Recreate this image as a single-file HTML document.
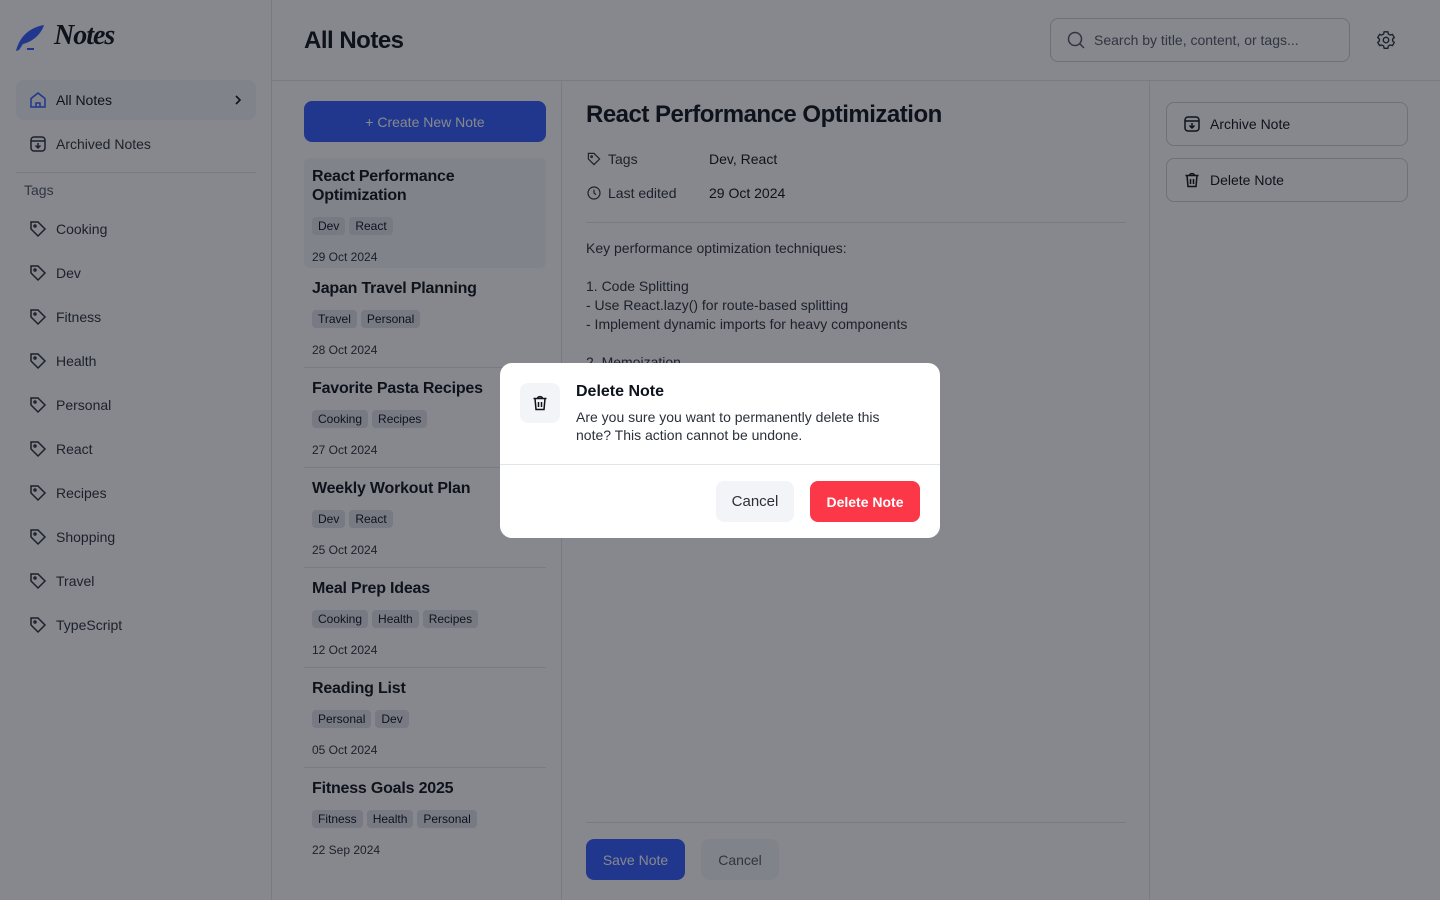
<!DOCTYPE html>
<html><head><meta charset="utf-8"><style>
*{box-sizing:border-box;margin:0;padding:0}
body{width:1440px;height:900px;position:relative;overflow:hidden;background:#fff;font-family:"Liberation Sans",sans-serif;color:#0e121b}
.a{position:absolute}
.side{left:0;top:0;width:272px;height:900px;border-right:1px solid #e1e4ea}
.nav{position:absolute;left:16px;width:240px;height:40px;border-radius:8px;display:flex;align-items:center;padding-left:40px;font-size:14px;color:#2b303b}
.nav svg{position:absolute;left:12px;top:10px}
.note{position:absolute;left:304px;width:242px;border-bottom:1px solid #e1e4ea;padding:0 8px}
.note h3{font-size:16px;font-weight:bold;line-height:19px;color:#0e121b;letter-spacing:-.2px}
.chips{display:flex;gap:4px;margin-top:12px}
.chip{background:#e0e3e9;border-radius:4px;font-size:12px;padding:2px 6px;line-height:14px;color:#0e121b}
.date{font-size:12px;color:#2b303b;margin-top:15px}
.btn{position:absolute;border-radius:8px;font-size:14px;display:flex;align-items:center;justify-content:center}
.ov{left:0;top:0;width:1440px;height:900px;background:rgba(14,18,27,.5)}
</style></head><body>
<div class="a side"></div>
<svg class="a" style="left:15px;top:24px" width="32" height="28" viewBox="0 0 32 28"><path d="M1 27 C4 15 12 4 29 1 C27 8 20 17 8 20 L4 26 Z" fill="#335cff"/><rect x="12" y="24" width="7" height="2" fill="#335cff"/></svg>
<div class="a" style="left:54px;top:20px;font-family:'Liberation Serif',serif;font-style:italic;font-weight:bold;font-size:28px;letter-spacing:-1px">Notes</div>
<div class="nav" style="top:80px;background:#f2f4f7;color:#0e121b"><svg width="20" height="20" viewBox="0 0 20 20" fill="none" stroke="#335cff" stroke-width="1.5"><path d="M3 8.5 10 3l7 5.5V17H3z M8 17v-4h4v4"/></svg>All Notes<svg style="left:auto;right:8px" width="20" height="20" viewBox="0 0 20 20" fill="none" stroke="#0e121b" stroke-width="1.6"><path d="M8 6l4 4-4 4"/></svg></div>
<div class="nav" style="top:124px"><svg width="20" height="20" viewBox="0 0 20 20" fill="none" stroke="#2b303b" stroke-width="1.5"><rect x="3" y="3" width="14" height="14" rx="3"/><path d="M3 7h14M10 9v5M7.5 11.5 10 14l2.5-2.5"/></svg>Archived Notes</div>
<div class="a" style="left:16px;top:172px;width:240px;border-top:1px solid #e1e4ea"></div>
<div class="a" style="left:24px;top:182px;font-size:14px;color:#525866">Tags</div>
<div id="tags"></div>
<div class="a" style="left:272px;top:80px;width:1168px;border-top:1px solid #e1e4ea"></div>
<div class="a" style="left:304px;top:27px;font-size:24px;font-weight:bold;letter-spacing:-.5px">All Notes</div>
<div class="a" style="left:1050px;top:18px;width:300px;height:44px;border:1px solid #cacfd8;border-radius:8px"></div>
<svg class="a" style="left:1066px;top:30px" width="20" height="20" viewBox="0 0 20 20" fill="none" stroke="#525866" stroke-width="1.5"><circle cx="9" cy="9" r="6.5"/><path d="M14 14l4 4"/></svg>
<div class="a" style="left:1094px;top:32px;font-size:14px;color:#525866">Search by title, content, or tags...</div>
<svg class="a" style="left:1375px;top:29px" width="22" height="22" viewBox="0 0 24 24" fill="none" stroke="#2b303b" stroke-width="1.5"><circle cx="12" cy="12" r="3"/><path d="M10 3h4l.6 2.4 2 1.2 2.4-.7 2 3.4-1.8 1.7v2l1.8 1.7-2 3.4-2.4-.7-2 1.2L14 21h-4l-.6-2.4-2-1.2-2.4.7-2-3.4L4.8 13v-2L3 9.3l2-3.4 2.4.7 2-1.2z"/></svg>
<div class="a" style="left:561px;top:80px;height:820px;border-left:1px solid #e1e4ea"></div>
<div class="a" style="left:1149px;top:80px;height:820px;border-left:1px solid #e1e4ea"></div>
<div class="btn" style="left:304px;top:101px;width:242px;height:41px;background:#335cff;color:#fff">+ Create New Note</div>
<div id="notes"></div>
<div class="a" style="left:586px;top:101px;font-size:24px;font-weight:bold;letter-spacing:-.5px">React Performance Optimization</div>
<svg class="a" style="left:586px;top:151px" width="16" height="16" viewBox="0 0 20 20" fill="none" stroke="#2b303b" stroke-width="1.5"><path d="M3 3h7l7 7-7 7-7-7z"/><circle cx="7" cy="7" r="1"/></svg>
<div class="a" style="left:608px;top:151px;font-size:14px;color:#2b303b">Tags</div>
<div class="a" style="left:709px;top:151px;font-size:14px;color:#0e121b">Dev, React</div>
<svg class="a" style="left:586px;top:185px" width="16" height="16" viewBox="0 0 20 20" fill="none" stroke="#2b303b" stroke-width="1.5"><circle cx="10" cy="10" r="7.5"/><path d="M10 6v4l2.5 2"/></svg>
<div class="a" style="left:608px;top:185px;font-size:14px;color:#2b303b">Last edited</div>
<div class="a" style="left:709px;top:185px;font-size:14px">29 Oct 2024</div>
<div class="a" style="left:586px;top:222px;width:540px;border-top:1px solid #e1e4ea"></div>
<div class="a" style="left:586px;top:239px;font-size:14px;line-height:19px;color:#2b303b;white-space:pre">Key performance optimization techniques:

1. Code Splitting
- Use React.lazy() for route-based splitting
- Implement dynamic imports for heavy components

2. Memoization
- Use useMemo for expensive calculations
- Use useCallback for function props
- Wrap pure components in React.memo

3. Virtualization
- Use react-window for long lists
- Profile with React DevTools to identify bottlenecks</div>
<div class="a" style="left:586px;top:822px;width:540px;border-top:1px solid #e1e4ea"></div>
<div class="btn" style="left:586px;top:839px;width:99px;height:41px;background:#335cff;color:#fff">Save Note</div>
<div class="btn" style="left:701px;top:839px;width:78px;height:41px;background:#f2f4f7;color:#525866">Cancel</div>
<div class="btn" style="left:1166px;top:102px;width:242px;height:44px;border:1px solid #cacfd8;justify-content:flex-start;padding-left:43px">Archive Note</div>
<svg class="a" style="left:1182px;top:114px" width="20" height="20" viewBox="0 0 20 20" fill="none" stroke="#0e121b" stroke-width="1.5"><rect x="3" y="3" width="14" height="14" rx="3"/><path d="M3 7h14M10 9v5M7.5 11.5 10 14l2.5-2.5"/></svg>
<div class="btn" style="left:1166px;top:158px;width:242px;height:44px;border:1px solid #cacfd8;justify-content:flex-start;padding-left:43px">Delete Note</div>
<svg class="a" style="left:1182px;top:170px" width="20" height="20" viewBox="0 0 20 20" fill="none" stroke="#0e121b" stroke-width="1.5"><path d="M3.5 5.5h13M7.5 5.5c0-2.5 5-2.5 5 0M5 5.5l1 11h8l1-11M8.5 9v5M11.5 9v5"/></svg>
<div class="a ov"></div>
<div class="a" style="left:500px;top:363px;width:440px;height:175px;background:#fff;border-radius:12px;overflow:hidden">
 <div class="a" style="left:20px;top:20px;width:40px;height:40px;border-radius:8px;background:#f2f4f7"></div>
 <svg class="a" style="left:30px;top:30px" width="20" height="20" viewBox="0 0 20 20" fill="none" stroke="#0e121b" stroke-width="1.5"><path d="M3.5 5.5h13M7.5 5.5c0-2.5 5-2.5 5 0M5 5.5l1 11h8l1-11M8.5 9v5M11.5 9v5"/></svg>
 <div class="a" style="left:76px;top:20px;font-size:16px;font-weight:bold">Delete Note</div>
 <div class="a" style="left:76px;top:45px;width:340px;font-size:14px;line-height:18px;color:#2b303b">Are you sure you want to permanently delete this note? This action cannot be undone.</div>
 <div class="a" style="left:0;top:101px;width:440px;border-top:1px solid #e1e4ea"></div>
 <div class="btn" style="left:216px;top:118px;width:78px;height:41px;background:#f2f4f7;color:#2b303b;font-size:15px">Cancel</div>
 <div class="btn" style="left:310px;top:118px;width:110px;height:41px;background:#fb3748;color:#fff;font-weight:bold;font-size:14px">Delete Note</div>
</div>
<script>
var t=["Cooking","Dev","Fitness","Health","Personal","React","Recipes","Shopping","Travel","TypeScript"],h="";
t.forEach(function(n,i){h+='<div class="nav" style="top:'+(209+44*i)+'px"><svg width="20" height="20" viewBox="0 0 20 20" fill="none" stroke="#2b303b" stroke-width="1.5"><path d="M3 3h7l7 7-7 7-7-7z"/><circle cx="7" cy="7" r="1"/></svg>'+n+'</div>'});
document.getElementById("tags").innerHTML=h;
var N=[["React Performance<br>Optimization",["Dev","React"],"29 Oct 2024"],["Japan Travel Planning",["Travel","Personal"],"28 Oct 2024"],["Favorite Pasta Recipes",["Cooking","Recipes"],"27 Oct 2024"],["Weekly Workout Plan",["Dev","React"],"25 Oct 2024"],["Meal Prep Ideas",["Cooking","Health","Recipes"],"12 Oct 2024"],["Reading List",["Personal","Dev"],"05 Oct 2024"],["Fitness Goals 2025",["Fitness","Health","Personal"],"22 Sep 2024"]];
h="";N.forEach(function(n,i){var top=i?168+100*i:158,ht=i?100:110;
h+='<div class="note" style="top:'+top+'px;height:'+ht+'px;padding-top:'+(i?11:9)+'px;'+(i==0?'background:#f2f4f7;border-radius:6px;border:none;':'')+(i==6?'border:none;':'')+'"><h3>'+n[0]+'</h3><div class="chips">'+n[1].map(function(c){return '<span class="chip">'+c+'</span>'}).join('')+'</div><div class="date">'+n[2]+'</div></div>'});
document.getElementById("notes").innerHTML=h;
</script>
</body></html>
